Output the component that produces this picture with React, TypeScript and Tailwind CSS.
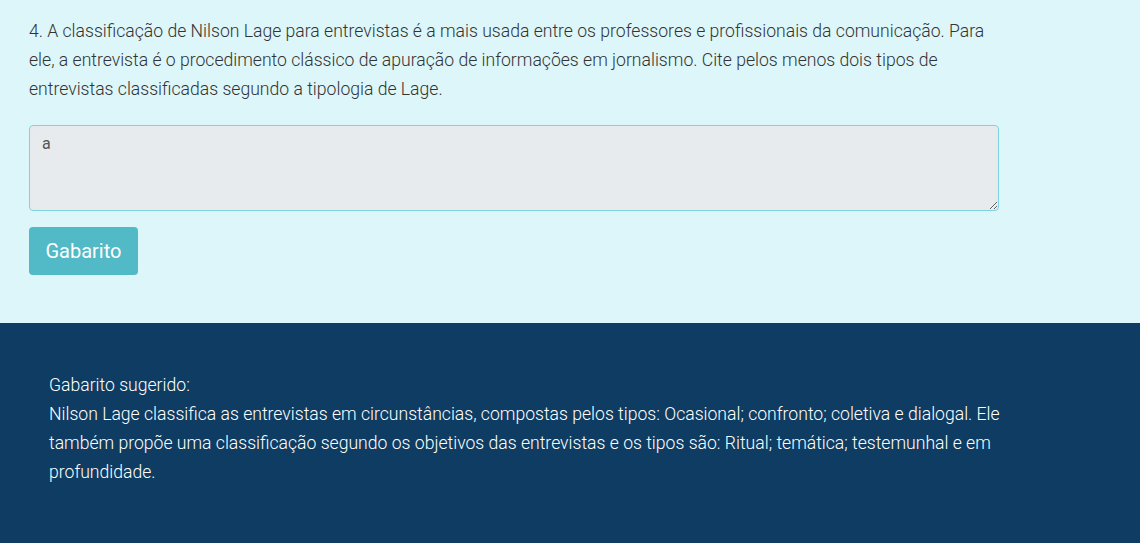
import React from 'react';

const App: React.FC = () => {
  return (
    <div className="min-h-[543px] bg-[#0e3c62] font-['Roboto',sans-serif] font-light">
      {/* Pergunta */}
      <div className="bg-[#ddf6f9] px-[29px] pt-[17px] pb-[48px]">
        <div className="w-[970px]">
          <p className="text-[17.6px] leading-[29px] text-[#333]">
            4. A classificação de Nilson Lage para entrevistas é a mais usada entre os professores e profissionais da comunicação. Para ele, a entrevista é o procedimento clássico de apuração de informações em jornalismo. Cite pelos menos dois tipos de entrevistas classificadas segundo a tipologia de Lage.
          </p>
          <textarea
            defaultValue="a"
            className="mt-[21px] block h-[86px] w-full rounded-[4px] border border-[#7fd3e0] bg-[#e8ebee] px-[12px] py-[6px] font-['Roboto',sans-serif] text-[16px] font-normal text-[#555] outline-none"
          />
          <button className="mt-[16px] h-[48px] w-[109px] rounded-[4px] bg-[#52b9c6] text-[20px] font-normal text-white">
            Gabarito
          </button>
        </div>
      </div>

      {/* Resposta */}
      <div className="px-[49px] pt-[48px] pb-[40px]">
        <div className="max-w-[1010px] text-[17.6px] leading-[29px] text-white">
          <p>Gabarito sugerido:</p>
          <p>
            Nilson Lage classifica as entrevistas em circunstâncias, compostas pelos tipos: Ocasional; confronto; coletiva e dialogal. Ele também propõe uma classificação segundo os objetivos das entrevistas e os tipos são: Ritual; temática; testemunhal e em profundidade.
          </p>
        </div>
      </div>
    </div>
  );
};

export default App;
